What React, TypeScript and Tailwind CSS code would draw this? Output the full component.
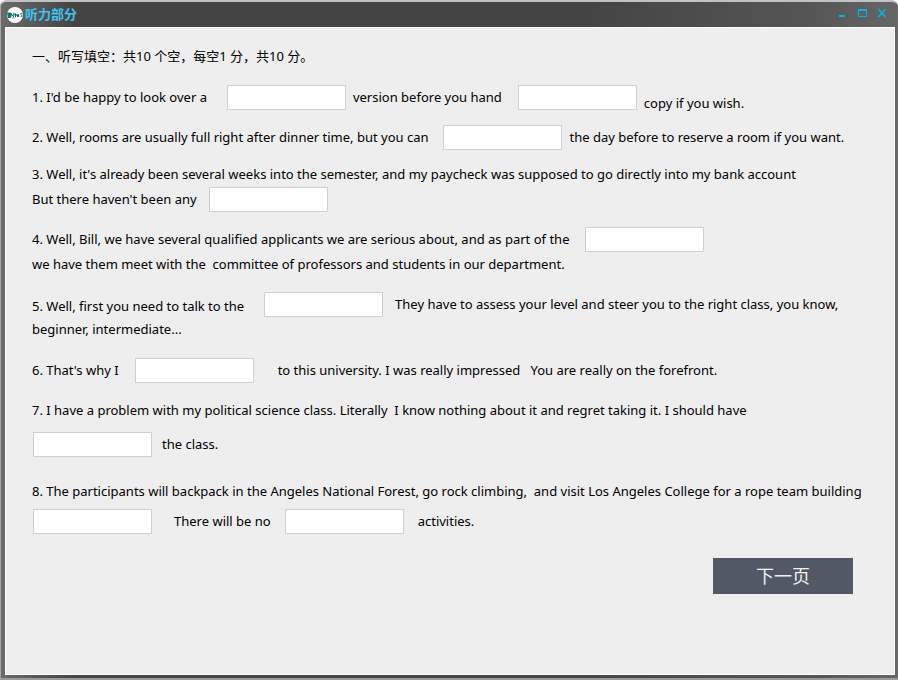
import { ReactNode } from "react";

function Blank({ name, className = "" }: { name: string; className?: string }) {
  return (
    <input
      type="text"
      name={name}
      aria-label={`Blank ${name}`}
      className={`h-[25px] w-[119px] shrink-0 border border-[#d0d0d0] bg-white px-1 outline-none focus:border-[#00b4f0] ${className}`}
    />
  );
}

function Row({ children, className = "" }: { children: ReactNode; className?: string }) {
  return (
    <div className={`flex min-h-[25px] items-center whitespace-pre ${className}`}>{children}</div>
  );
}

export default function App() {
  return (
    <div className="flex min-h-screen flex-col rounded-t-md border-t-2 border-b-2 border-l border-t-[#bfc3c6] border-b-[#9a9a9a] border-l-[#a8a8a8] bg-[linear-gradient(to_right,#6b6b6b,#444444_8%,#444444_65%,#555555_90%,#666666)] pr-[3px] pb-[3px] pl-1 font-['Noto_Sans','Noto_Sans_CJK_SC',sans-serif] text-[13px] text-black">
      <header className="flex h-[25px] items-center justify-between pr-1.5 pl-0.5">
        <div className="flex items-center gap-0.5">
          <svg viewBox="0 0 16 16" className="size-4" fill="none">
            <circle cx="8" cy="8" r="8" fill="#ffffff" />
            <path d="M0 5.500h3.500l1 1.500v3l-1.500 1H1z" fill="#0b7770" />
            <path
              d="M4 6l1.500 3L7 6M6 11l1.500-4M8.500 10V6.500l1 2 1-1V10M11.500 7v3M15.500 6.500c-2-.5-2.500 1-1 1.500s1 2-1 1.500"
              stroke="#0b7770"
            />
            <path d="M5 11h4" stroke="#b9c98a" />
          </svg>
          <h1 className="font-bold text-[#3cc4f0]">听力部分</h1>
        </div>
        <div className="mb-1 flex items-center gap-2 text-[#00b4f0]">
          <button type="button" aria-label="Minimize">
            <svg viewBox="0 0 12 12" className="size-3">
              <path d="M2 8h6v2H2z" fill="currentColor" />
            </svg>
          </button>
          <button type="button" aria-label="Maximize">
            <svg viewBox="0 0 12 12" className="size-3" fill="none" stroke="currentColor">
              <path d="M1.500 2.500h8v7h-8zM1 3.500h9" />
            </svg>
          </button>
          <button type="button" aria-label="Close">
            <svg viewBox="0 0 12 12" className="size-3" fill="none" stroke="currentColor" strokeWidth="1.500">
              <path d="M1.500 2l7 8M8.500 2l-7 8" />
            </svg>
          </button>
        </div>
      </header>

      <main className="flex-1 border border-white bg-[#eeeeee] px-[26px] pt-4">
        <Row className="mb-4">
          <h2>一、听写填空：共10 个空，每空1 分，共10 分。</h2>
        </Row>

        <Row className="mb-[15px]">
          <span>1. I'd be happy to look over a</span>
          <Blank name="1a" className="mr-[7px] ml-5" />
          <span>version before you hand</span>
          <Blank name="1b" className="mr-[7px] ml-4" />
          <span className="self-end leading-none">copy if you wish.</span>
        </Row>

        <Row className="mb-3">
          <span>2. Well, rooms are usually full right after dinner time, but you can</span>
          <Blank name="2" className="mr-2 ml-3.5" />
          <span>the day before to reserve a room if you want.</span>
        </Row>

        <Row>
          <span>3. Well, it's already been several weeks into the semester, and my paycheck was supposed to go directly into my bank account</span>
        </Row>
        <Row className="mb-[15px]">
          <span>But there haven't been any</span>
          <Blank name="3" className="ml-3" />
        </Row>

        <Row>
          <span>4. Well, Bill, we have several qualified applicants we are serious about, and as part of the</span>
          <Blank name="4" className="ml-4" />
        </Row>
        <Row className="mb-[15px]">
          <span>we have them meet with the  committee of professors and students in our department.</span>
        </Row>

        <Row>
          <span className="mt-1">5. Well, first you need to talk to the</span>
          <Blank name="5" className="mr-3 ml-5" />
          <span>They have to assess your level and steer you to the right class, you know,</span>
        </Row>
        <Row className="mb-4">
          <span>beginner, intermediate...</span>
        </Row>

        <Row className="mb-[15px]">
          <span>6. That's why I</span>
          <Blank name="6" className="mr-6 ml-4" />
          <span>to this university. I was really impressed   You are really on the forefront.</span>
        </Row>

        <Row className="mb-[9px]">
          <span>7. I have a problem with my political science class. Literally  I know nothing about it and regret taking it. I should have</span>
        </Row>
        <Row className="mb-[22px]">
          <Blank name="7" className="mr-2.5 ml-px" />
          <span>the class.</span>
        </Row>

        <Row className="mb-[5px]">
          <span>8. The participants will backpack in the Angeles National Forest, go rock climbing,  and visit Los Angeles College for a rope team building</span>
        </Row>
        <Row className="mb-6">
          <Blank name="8a" className="mr-[22px] ml-px" />
          <span>There will be no</span>
          <Blank name="8b" className="mx-3.5" />
          <span>activities.</span>
        </Row>

        <div className="mr-[15px] flex justify-end">
          <button type="button" className="h-9 w-[140px] bg-[#525866] text-lg text-[#f2f2f2]">
            下一页
          </button>
        </div>
      </main>
    </div>
  );
}
